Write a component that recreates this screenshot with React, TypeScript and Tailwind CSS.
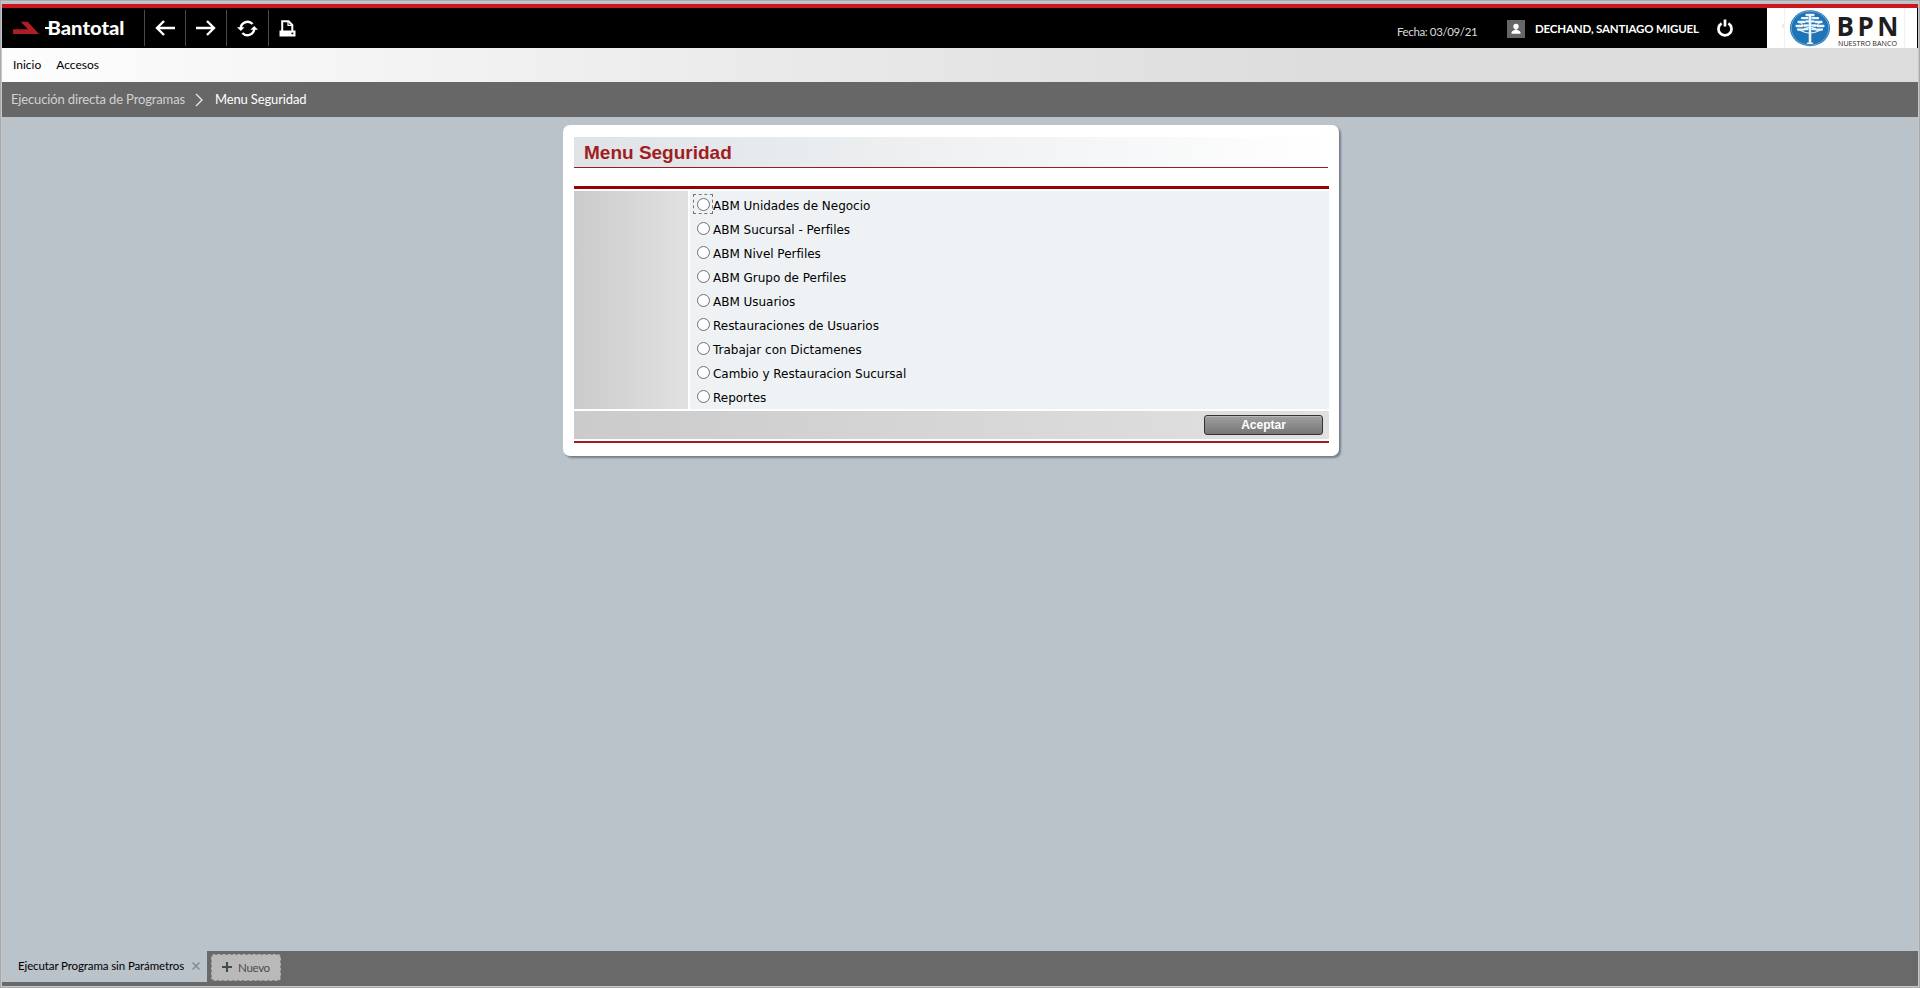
import React from 'react';

const options = [
  'ABM Unidades de Negocio',
  'ABM Sucursal - Perfiles',
  'ABM Nivel Perfiles',
  'ABM Grupo de Perfiles',
  'ABM Usuarios',
  'Restauraciones de Usuarios',
  'Trabajar con Dictamenes',
  'Cambio y Restauracion Sucursal',
  'Reportes',
];

const sans = "font-['Lato',sans-serif]";

function BantotalLogo() {
  return (
    <svg width="142" height="40" viewBox="0 0 142 40" className="block shrink-0">
      <path d="M11 26 V21.3 H26 L18.7 13.8 H25.7 L37 26 Z" fill="#b01e23" />
      <path d="M43 20 H52" stroke="#fff" strokeWidth="2" />
      <text x="45.5" y="26.5" textLength="77" lengthAdjust="spacingAndGlyphs" fontFamily="Lato, sans-serif" fontWeight="900" fontSize="18.8" fill="#fff">
        Bantotal
      </text>
    </svg>
  );
}

function ToolButton({ children, label, width = 'w-[41px]' }: { children: React.ReactNode; label: string; width?: string }) {
  return (
    <button aria-label={label} className={`flex h-9 items-center justify-center border-l border-[#4a4a4a] ${width}`}>
      {children}
    </button>
  );
}

function Toolbar() {
  return (
    <div className="flex items-center">
      <ToolButton label="Atrás">
        <svg width="20" height="16" viewBox="0 0 20 16" fill="none" stroke="#fff" strokeWidth="2.4">
          <path d="M20 8 H2 M9 1 L2 8 L9 15" />
        </svg>
      </ToolButton>
      <ToolButton label="Adelante">
        <svg width="20" height="16" viewBox="0 0 20 16" fill="none" stroke="#fff" strokeWidth="2.4">
          <path d="M0 8 H18 M11 1 L18 8 L11 15" />
        </svg>
      </ToolButton>
      <ToolButton label="Actualizar" width="w-[42px]">
        <svg width="21" height="17" viewBox="0 0 21 17" fill="none" stroke="#fff" strokeWidth="2.4">
          <path d="M3.8 9 A6.8 6.8 0 0 1 15.6 4" />
          <path d="M17.2 8 A6.8 6.8 0 0 1 5.4 13" />
          <path d="M0 7.2 H7.6 L3.8 11 Z M13.4 9.8 H21 L17.2 6 Z" fill="#fff" stroke="none" />
        </svg>
      </ToolButton>
      <ToolButton label="Imprimir">
        <svg width="17" height="17" viewBox="0 0 17 17" className="-ml-1">
          <path d="M3.2 11 V1.2 H9.5 L13.3 5 V11" fill="none" stroke="#fff" strokeWidth="2" />
          <path d="M9 1 V5.3 H14" fill="none" stroke="#fff" strokeWidth="1.2" />
          <path d="M0.5 10.5 H16.5 V16.5 H0.5 Z" fill="#fff" />
          <path d="M12.5 12.6 H14.3 V14.2 H12.5 Z" fill="#000" />
        </svg>
      </ToolButton>
    </div>
  );
}

function BpnLogo() {
  return (
    <svg width="150" height="40" viewBox="0 0 150 40" className="block shrink-0">
      <rect width="150" height="40" fill="#fff" />
      <path d="M17.5 0 V40 M137.5 0 V40" stroke="#f2f2f2" />
      <path d="M16 16 V20" stroke="#d8d8d8" />
      <ellipse cx="43" cy="20.2" rx="20" ry="18" fill="#1f74b6" />
      <ellipse cx="43" cy="20.2" rx="18.8" ry="16.9" fill="none" stroke="#9cc6e6" strokeWidth="0.6" />
      <g fill="none" stroke="#e9f4fb" strokeLinecap="round">
        <path d="M43 9 V34" strokeWidth="2.6" />
        <path d="M40.5 35.2 H45.5" strokeWidth="1.6" />
        <path d="M43 25 C38 25 34 23 31 21 M43 25 C48 25 52 23 55 21 M43 20 C38 19 35 17 33 14 M43 20 C48 19 51 17 53 14" strokeWidth="1.1" />
        <path d="M29.5 18 H35.5 M50.5 18 H56.5 M31.5 14 H37.5 M48.5 14 H54.5 M35 10.2 H40.5 M45.5 10.2 H51 M39.5 7 H46.5 M31 21.6 H37 M49 21.6 H55 M37.5 17.4 H41 M45 17.4 H48.5 M39.5 13.4 H46.5 M38 21 H40.5 M45.5 21 H48" strokeWidth="2.3" />
      </g>
      <g fontFamily="Open Sans, sans-serif" fill="#1f1d1e">
        <text x="69.5" y="28" textLength="62" lengthAdjust="spacing" fontWeight="700" fontSize="26">BPN</text>
        <text x="71" y="37.8" textLength="59" lengthAdjust="spacingAndGlyphs" fontSize="6.4">NUESTRO BANCO</text>
      </g>
    </svg>
  );
}

function Header() {
  return (
    <header className={`flex h-11 items-start border-t-4 border-[#cb171b] bg-black text-white ${sans}`}>
      <div className="flex h-10 items-center">
        <BantotalLogo />
        <Toolbar />
      </div>
      <div className="ml-auto flex h-10 items-center">
        <span className="mt-[7px] w-[110px] text-[11.5px] tracking-[-0.38px] text-[#ddd]">Fecha: 03/09/21</span>
        <svg width="18" height="18" viewBox="0 0 18 18" className="mt-[1px]">
          <rect width="18" height="18" fill="#666" />
          <circle cx="9" cy="6.5" r="2.7" fill="#fff" />
          <path d="M4.5 13.8 V12.5 Q4.5 11 7 10.2 L9 9 L11 10.2 Q13.5 11 13.5 12.5 V13.8 Z" fill="#fff" />
        </svg>
        <span className="mt-[1px] ml-[10px] w-[182px] text-[11.5px] font-bold tracking-[-0.16px] whitespace-nowrap">DECHAND, SANTIAGO MIGUEL</span>
        <svg width="16" height="18" viewBox="0 0 16 18" fill="none" stroke="#fff" strokeWidth="2.7" className="mr-[34px]">
          <path d="M4.6 4.4 A6.5 6.5 0 1 0 11.4 4.4 M8 0.5 V7.5" />
        </svg>
      </div>
      <BpnLogo />
      <div className="w-px" />
    </header>
  );
}

function Panel() {
  return (
    <section className="mt-2 ml-[561px] h-[331px] w-[776px] rounded-[7px] bg-white pt-3 pr-[10px] pl-[11px] shadow-[2px_2px_2px_#75808a]">
      <div className="mr-px h-[31px] border-b border-[#9a1c20] bg-linear-to-r from-[#dfe3e6] to-white pl-[10px] font-['Liberation_Sans',sans-serif] text-[19px] leading-[31px] font-bold text-[#a11d21]">
        Menu Seguridad
      </div>
      <div className="mt-[18px] h-[3px] bg-[#990000]" />
      <div className="mt-[2px] flex h-[218px] gap-[2px]">
        <div className="w-[114px] bg-linear-to-r from-[#cbcbcb] to-[#e1e1e1]" />
        <div className="flex-1 bg-[#eef2f5] pt-[2px] pl-[3px]">
          {options.map((text, i) => (
            <label key={text} className="flex h-6 items-center font-['DejaVu_Sans',sans-serif] text-[12px] tracking-[-0.02px] text-black">
              <span className={`-mt-[2px] flex h-5 w-5 items-center justify-center border border-dashed ${i === 0 ? 'border-[#777]' : 'border-transparent'}`}>
                <span className="h-[13px] w-[13px] rounded-full border border-[#707070] bg-white" />
              </span>
              <span className="mt-px">{text}</span>
            </label>
          ))}
        </div>
      </div>
      <div className="mt-[2px] flex h-7 items-center justify-end bg-linear-to-r from-[#cbcbcb] to-[#e1e1e1] pr-[6px]">
        <button className="h-5 w-[119px] rounded-[3px] border border-[#333] bg-linear-to-b from-[#a0a0a0] to-[#767676] font-['Liberation_Sans',sans-serif] text-[12px] leading-[17px] font-bold text-white shadow-[inset_0_1px_0_#b8b8b8]">
          Aceptar
        </button>
      </div>
      <div className="mt-[2px] h-[2px] bg-[#a01c20]" />
    </section>
  );
}

function BottomTabs() {
  return (
    <footer className={`flex h-[35px] bg-[#696969] ${sans}`}>
      <div className="flex h-[31px] w-[205px] items-center bg-[#bac2ca] pl-4 text-[11.5px] tracking-[-0.11px] whitespace-nowrap text-black">
        <span className="-mt-px w-[174px]">Ejecutar Programa sin Parámetros</span>
        <svg width="8" height="8" viewBox="0 0 8 8" stroke="#858a8f" strokeWidth="1.5" className="-mt-px">
          <path d="M0.5 0.5 L7.5 7.5 M7.5 0.5 L0.5 7.5" />
        </svg>
      </div>
      <button className="mt-[3px] ml-1 flex h-[27px] w-[70px] items-center rounded-[4px] border border-dashed border-[#858585] bg-[#b9b9b9] pl-[10px] text-[11.5px] tracking-[-0.3px] text-[#4c4c4c]">
        <svg width="10" height="10" viewBox="0 0 10 10" stroke="#484848" strokeWidth="2" className="-mt-[2px]">
          <path d="M5 0 V10 M0 5 H10" />
        </svg>
        <span className="ml-[6px]">Nuevo</span>
      </button>
    </footer>
  );
}

export default function App() {
  return (
    <div className="h-[988px] w-[1920px] overflow-hidden border border-[#a9a9a9]">
      <div className="flex h-full flex-col border border-[#c8c8c8] bg-[#bac2ca] pt-[2px]">
        <Header />
        <nav className={`flex h-[34px] items-center gap-[15px] bg-linear-to-r from-[#fdfdfd] to-[#dcdcdc] to-70% pl-[11px] text-[12px] text-black ${sans}`}>
          <span>Inicio</span>
          <span>Accesos</span>
        </nav>
        <div className={`flex h-[35px] items-center bg-[#676767] pl-[9px] text-[13px] tracking-[-0.14px] ${sans}`}>
          <span className="w-[184px] whitespace-nowrap text-[#d2d2d2]">Ejecución directa de Programas</span>
          <svg width="8" height="14" viewBox="0 0 8 14" fill="none" stroke="#e8e8e8" strokeWidth="1.4">
            <path d="M1 1 L7 7 L1 13" />
          </svg>
          <span className="ml-3 text-white">Menu Seguridad</span>
        </div>
        <main className="flex-1">
          <Panel />
        </main>
        <BottomTabs />
      </div>
    </div>
  );
}
